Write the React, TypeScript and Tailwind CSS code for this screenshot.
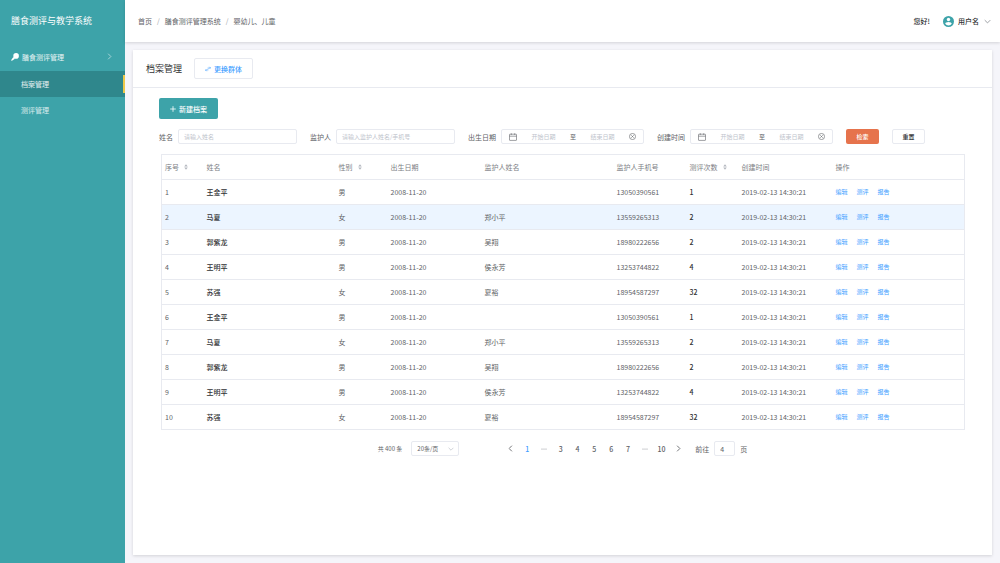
import { useState } from "react";

type RecordRow = {
  name: string;
  sex: string;
  guardian: string;
  phone: string;
  count: number;
};

const people: RecordRow[] = [
  { name: "王金平", sex: "男", guardian: "", phone: "13050390561", count: 1 },
  { name: "马夏", sex: "女", guardian: "郑小平", phone: "13559265313", count: 2 },
  { name: "郭紫龙", sex: "男", guardian: "吴翔", phone: "18980222656", count: 2 },
  { name: "王明平", sex: "男", guardian: "侯永芳", phone: "13253744822", count: 4 },
  { name: "苏强", sex: "女", guardian: "夏裕", phone: "18954587297", count: 32 },
];

const rows = [...people, ...people];

const columns = [
  { title: "序号", width: "w-[42px]", sortable: true },
  { title: "姓名", width: "w-[132px]" },
  { title: "性别", width: "w-[52px]", sortable: true },
  { title: "出生日期", width: "w-[94px]" },
  { title: "监护人姓名", width: "w-[132px]" },
  { title: "监护人手机号", width: "w-[73px]" },
  { title: "测评次数", width: "w-[52px]", sortable: true },
  { title: "创建时间", width: "w-[94px]" },
  { title: "操作", width: "w-[132px]" },
];

const pages = ["1", "…", "3", "4", "5", "6", "7", "…", "10"];

const Chevron = ({ className, d }: { className: string; d: string }) => (
  <svg className={className} viewBox="0 0 8 8" fill="none" stroke="currentColor" strokeWidth="1">
    <path d={d} />
  </svg>
);

const DOWN = "M0.8 2.4 4 5.6 7.2 2.4";
const RIGHT = "M2.4 0.8 5.6 4 2.4 7.2";
const LEFT = "M5.6 0.8 2.4 4 5.6 7.2";

const SortIcon = () => (
  <svg className="h-[6px] w-1" viewBox="0 0 4 6" fill="#b4b8bf">
    <path d="M2 0.3 3.8 2.4H0.2zM2 5.7 3.8 3.6H0.2z" />
  </svg>
);

const Sidebar = () => (
  <aside className="w-[125px] shrink-0 bg-[#3da3a9] text-white">
    <div className="flex h-[42px] items-center pl-[11px] text-[9px]">膳食测评与教学系统</div>
    <nav className="text-[7px]">
      <button type="button" className="flex h-[29px] w-full items-center pr-3 pl-[11px] text-white/90">
        <svg className="mr-[3px] size-2" viewBox="0 0 8 8" fill="white">
          <circle cx="5.1" cy="2.9" r="2.8" />
          <path d="M2.3 4 4 5.7 1.3 7.6Q0.7 8 0.3 7.6 0 7.2 0.4 6.7z" />
        </svg>
        膳食测评管理
        <Chevron className="ml-auto size-[7px] text-white/60" d={RIGHT} />
      </button>
      <a href="#archives" className="flex h-[26px] items-center justify-between bg-[#2f878c] pl-[21px] text-white/90">
        档案管理
        <span className="h-[18px] w-[2px] bg-[#ecc94b]" />
      </a>
      <a href="#reviews" className="flex h-[26px] items-center pl-[21px] text-white/80">
        测评管理
      </a>
    </nav>
  </aside>
);

const Header = () => (
  <header className="z-10 flex h-[42px] shrink-0 items-center justify-between bg-white pr-[9px] pl-[13px] text-[7px] shadow-[0_1px_3px_rgba(0,0,0,0.14)]">
    <nav className="flex gap-[5px] text-[#606266]">
      <a href="#home">首页</a>
      <span className="text-[#a0a3a8]">/</span>
      <a href="#system">膳食测评管理系统</a>
      <span className="text-[#a0a3a8]">/</span>
      <span>婴幼儿、儿童</span>
    </nav>
    <div className="flex items-center text-[#303133]">
      <span className="font-medium">您好!</span>
      <button type="button" className="ml-[13px] flex items-center gap-1 font-medium">
        <svg className="size-[11px]" viewBox="0 0 11 11">
          <circle cx="5.5" cy="5.5" r="5.5" fill="#3da3a9" />
          <circle cx="5.5" cy="3.5" r="1.7" fill="white" />
          <path d="M2.2 7.7Q2.4 6 5.5 6T8.8 7.7Q7.6 9.4 5.5 9.4T2.2 7.7z" fill="white" />
        </svg>
        用户名
        <Chevron className="ml-px size-[7px] text-[#909399]" d={DOWN} />
      </button>
    </div>
  </header>
);

const inputStyle =
  "h-[15px] rounded-[2px] border border-[#e8eaf0] bg-white text-[6px] text-[#606266] placeholder:text-[#c0c4cc] outline-none";

const TextField = ({ id, label, placeholder }: { id: string; label: string; placeholder: string }) => (
  <div className="flex items-center gap-[5px]">
    <label htmlFor={id}>{label}</label>
    <input id={id} className={`${inputStyle} w-[119px] px-[5px]`} placeholder={placeholder} />
  </div>
);

const DateRange = ({ id, label }: { id: string; label: string }) => (
  <div className="flex items-center gap-[5px]">
    <label htmlFor={id}>{label}</label>
    <div className="flex h-[15px] w-[143px] items-center rounded-[2px] border border-[#e8eaf0] px-[7px] text-[6px]">
      <svg className="size-2 shrink-0" viewBox="0 0 8 8" fill="none" stroke="#606266" strokeWidth="0.6">
        <rect x="0.5" y="1.2" width="7" height="6.2" rx="0.4" />
        <path d="M0.5 3.2h7M2.3 0.3v1.6M5.7 0.3v1.6" />
      </svg>
      <input
        id={id}
        className="w-0 min-w-0 flex-1 text-center outline-none placeholder:text-[#c0c4cc]"
        placeholder="开始日期"
      />
      <span>至</span>
      <input
        aria-label={`${label}结束日期`}
        className="w-0 min-w-0 flex-1 text-center outline-none placeholder:text-[#c0c4cc]"
        placeholder="结束日期"
      />
      <button type="button" aria-label="清除" className="shrink-0">
        <svg className="size-[7px]" viewBox="0 0 8 8" fill="none" stroke="#606266" strokeWidth="0.7">
          <circle cx="4" cy="4" r="3.5" />
          <path d="M2.6 2.6 5.4 5.4M5.4 2.6 2.6 5.4" />
        </svg>
      </button>
    </div>
  </div>
);

const Filters = () => (
  <form className="mt-[10px] flex flex-wrap items-center gap-x-[13px] gap-y-2 text-[7px] text-[#606266]">
    <TextField id="name" label="姓名" placeholder="请输入姓名" />
    <TextField id="guardian" label="监护人" placeholder="请输入监护人姓名/手机号" />
    <DateRange id="birth" label="出生日期" />
    <DateRange id="created" label="创建时间" />
    <button type="button" className="h-[15px] w-[33px] rounded-[2px] bg-[#e6734c] text-[6px] font-medium text-white">
      检索
    </button>
    <button
      type="button"
      className="h-[15px] w-[33px] rounded-[2px] border border-[#e8eaf0] text-[6px] font-medium text-[#303133]"
    >
      重置
    </button>
  </form>
);

const RecordTable = () => (
  <div className="mx-[2px] mt-[10px]">
    <table className="w-full table-fixed border-collapse border border-[#e8eaf0] text-left text-[7px] text-[#606266]">
      <thead>
        <tr className="h-[25px] border-b border-[#e8eaf0] text-[#7d8085]">
          {columns.map((column) => (
            <th key={column.title} className={`${column.width} p-0 pl-[3px] font-normal whitespace-nowrap`}>
              <span className="flex items-center gap-[5px]">
                {column.title}
                {column.sortable && <SortIcon />}
              </span>
            </th>
          ))}
        </tr>
      </thead>
      <tbody>
        {rows.map((row, index) => (
          <tr
            key={index}
            className={`h-[25px] border-b border-[#e8eaf0] *:p-0 *:pl-[3px] ${index === 1 ? "bg-[#ecf5ff]" : ""}`}
          >
            <td>{index + 1}</td>
            <td className="font-medium text-[#303133]">{row.name}</td>
            <td>{row.sex}</td>
            <td>2008-11-20</td>
            <td>{row.guardian}</td>
            <td>{row.phone}</td>
            <td className="font-medium text-[#303133]">{row.count}</td>
            <td>2019-02-13 14:30:21</td>
            <td>
              <div className="flex gap-[9px] text-[6px] text-[#409eff]">
                <a href="#edit">编辑</a>
                <a href="#review">测评</a>
                <a href="#report">报告</a>
              </div>
            </td>
          </tr>
        ))}
      </tbody>
    </table>
  </div>
);

const Pagination = () => {
  const [current, setCurrent] = useState("1");

  return (
    <div className="mt-[11px] flex h-[15px] items-center justify-center text-[6px] text-[#606266]">
      <span>共 400 条</span>
      <div className="relative ml-[9px]">
        <select
          aria-label="每页条数"
          className="block h-[15px] w-12 appearance-none rounded-[2px] border border-[#e8eaf0] bg-white pl-[5px] outline-none"
        >
          <option>20条/页</option>
          <option>50条/页</option>
        </select>
        <Chevron className="pointer-events-none absolute top-[5px] right-[5px] size-[6px] text-[#c0c4cc]" d={DOWN} />
      </div>
      <div className="ml-[43px] flex w-[184px] justify-between">
        <button type="button" aria-label="上一页" className="flex w-4 items-center justify-center">
          <Chevron className="size-[7px]" d={LEFT} />
        </button>
        {pages.map((page, index) =>
          page === "…" ? (
            <span key={index} className="flex w-4 items-center justify-center">
              <svg className="h-[2px] w-[6px]" viewBox="0 0 6 2" fill="#909399">
                <circle cx="1" cy="1" r="0.6" />
                <circle cx="3" cy="1" r="0.6" />
                <circle cx="5" cy="1" r="0.6" />
              </svg>
            </span>
          ) : (
            <button
              key={index}
              type="button"
              onClick={() => setCurrent(page)}
              className={`w-4 text-center text-[7px] font-medium ${page === current ? "text-[#409eff]" : ""}`}
            >
              {page}
            </button>
          )
        )}
        <button type="button" aria-label="下一页" className="flex w-4 items-center justify-center">
          <Chevron className="size-[7px]" d={RIGHT} />
        </button>
      </div>
      <label htmlFor="jump" className="ml-[9px] text-[7px]">
        前往
      </label>
      <input
        id="jump"
        defaultValue="4"
        className="mx-[5px] h-[15px] w-[21px] rounded-[2px] border border-[#e8eaf0] px-[5px] text-[7px] outline-none"
      />
      <span className="text-[7px]">页</span>
    </div>
  );
};

const App = () => (
  <div className="flex min-h-screen bg-[#f5f5fa] font-['Noto_Sans_CJK_SC',sans-serif] leading-[10px]">
    <Sidebar />
    <div className="flex min-w-0 flex-1 flex-col">
      <Header />
      <main className="m-2 flex-1 bg-white shadow-[0_1px_3px_rgba(0,0,0,0.14)]">
        <div className="flex h-[38px] items-center gap-3 border-b border-[#e8eaf0] px-[13px]">
          <h1 className="text-[9px] text-[#303133]">档案管理</h1>
          <button
            type="button"
            className="flex h-[21px] w-[59px] items-center justify-center gap-[3px] rounded-[2px] border border-[#e8eaf0] text-[7px] font-medium text-[#409eff]"
          >
            <svg className="size-[6px]" viewBox="0 0 6 6" fill="none" stroke="currentColor" strokeWidth="0.7">
              <path d="M2.6 2.1H5.7L4.4 0.8M3.4 3.9H0.3L1.6 5.2" />
            </svg>
            更换群体
          </button>
        </div>
        <div className="px-[26px] pt-[10px] pb-4">
          <button
            type="button"
            className="flex h-[21px] w-[59px] items-center justify-center gap-[3px] rounded-[2px] bg-[#3da3a9] text-[7px] font-medium text-white"
          >
            <svg className="size-[6px]" viewBox="0 0 6 6" stroke="currentColor" strokeWidth="0.8">
              <path d="M3 0.2V5.8M0.2 3H5.8" />
            </svg>
            新建档案
          </button>
          <Filters />
          <RecordTable />
          <Pagination />
        </div>
      </main>
    </div>
  </div>
);

export default App;
